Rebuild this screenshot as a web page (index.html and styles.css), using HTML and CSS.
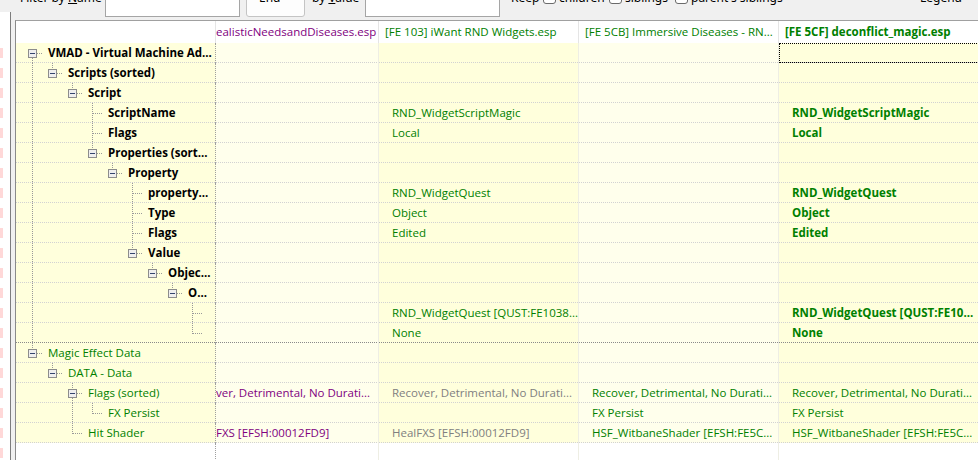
FILE: index.html
```html
<!DOCTYPE html>
<html>
<head>
<meta charset="utf-8">
<title>xEdit view</title>
<link rel="stylesheet" href="styles.css">
</head>
<body>
<svg class="defs" aria-hidden="true">
  <symbol id="v" viewBox="0 0 20 20"><path class="dl" d="M10.5 0V20"/></symbol>
  <symbol id="t" viewBox="0 0 20 20"><path class="dl" d="M10.5 0V20M11 10.5H20"/></symbol>
  <symbol id="e" viewBox="0 0 20 20"><path class="dl" d="M10.5 0V11M11 10.5H20"/></symbol>
  <symbol id="bu" viewBox="0 0 20 20"><path class="dl" d="M10.5 0V6M15 10.5H20"/><rect class="bx" x="6.5" y="6.5" width="8" height="8"/><path class="mn" d="M8 10.5H13"/></symbol>
  <symbol id="bd" viewBox="0 0 20 20"><path class="dl" d="M10.5 15V20M15 10.5H20"/><rect class="bx" x="6.5" y="6.5" width="8" height="8"/><path class="mn" d="M8 10.5H13"/></symbol>
  <symbol id="bud" viewBox="0 0 20 20"><path class="dl" d="M10.5 0V6M10.5 15V20M15 10.5H20"/><rect class="bx" x="6.5" y="6.5" width="8" height="8"/><path class="mn" d="M8 10.5H13"/></symbol>
</svg>

<div class="side">
  <div class="side-pane"><div class="side-pink"></div></div>
</div>

<div class="right">
  <div class="toolbar">
    <span class="lbl w-name">Filter by <u>N</u>ame</span>
    <span class="field w-f1"></span>
    <span class="combo">End</span>
    <span class="lbl w-value">by <u>V</u>alue</span>
    <span class="field w-f2"></span>
    <span class="lbl w-keep">Keep</span>
    <span class="chk"></span><span class="lbl w-ch">children</span>
    <span class="chk"></span><span class="lbl w-sib">siblings</span>
    <span class="chk"></span><span class="lbl">parent's siblings</span>
    <span class="lbl legend">Legend</span>
  </div>

  <div class="grid">
    <div class="hrow">
      <div class="h"></div>
      <div class="h h1 purple">ealisticNeedsandDiseases.esp</div>
      <div class="h green">[FE 103] iWant RND Widgets.esp</div>
      <div class="h green">[FE 5CB] Immersive Diseases - RN...</div>
      <div class="h green b">[FE 5CF] deconflict_magic.esp</div>
    </div>

    <div class="row">
      <div class="c tree"><svg class="s"><use href="#bd"/></svg><span class="tt b">VMAD - Virtual Machine Ad...</span></div>
      <div class="c l1"></div><div class="c d2"></div><div class="c l3"></div><div class="c d4 focus"></div>
    </div>
    <div class="row">
      <div class="c tree"><svg class="s"><use href="#v"/></svg><svg class="s"><use href="#bu"/></svg><span class="tt b">Scripts (sorted)</span></div>
      <div class="c l1"></div><div class="c d2"></div><div class="c l3"></div><div class="c d4"></div>
    </div>
    <div class="row">
      <div class="c tree"><svg class="s"><use href="#v"/></svg><i class="sp"></i><svg class="s"><use href="#bu"/></svg><span class="tt b">Script</span></div>
      <div class="c l1"></div><div class="c d2"></div><div class="c l3"></div><div class="c d4"></div>
    </div>
    <div class="row">
      <div class="c tree"><svg class="s"><use href="#v"/></svg><i class="sp"></i><i class="sp"></i><svg class="s"><use href="#t"/></svg><span class="tt b">ScriptName</span></div>
      <div class="c l1"></div><div class="c d2 green">RND_WidgetScriptMagic</div><div class="c l3"></div><div class="c d4 green b">RND_WidgetScriptMagic</div>
    </div>
    <div class="row">
      <div class="c tree"><svg class="s"><use href="#v"/></svg><i class="sp"></i><i class="sp"></i><svg class="s"><use href="#t"/></svg><span class="tt b">Flags</span></div>
      <div class="c l1"></div><div class="c d2 green">Local</div><div class="c l3"></div><div class="c d4 green b">Local</div>
    </div>
    <div class="row">
      <div class="c tree"><svg class="s"><use href="#v"/></svg><i class="sp"></i><i class="sp"></i><svg class="s"><use href="#bu"/></svg><span class="tt b">Properties (sort...</span></div>
      <div class="c l1"></div><div class="c d2"></div><div class="c l3"></div><div class="c d4"></div>
    </div>
    <div class="row">
      <div class="c tree"><svg class="s"><use href="#v"/></svg><i class="sp"></i><i class="sp"></i><i class="sp"></i><svg class="s"><use href="#bu"/></svg><span class="tt b">Property</span></div>
      <div class="c l1"></div><div class="c d2"></div><div class="c l3"></div><div class="c d4"></div>
    </div>
    <div class="row">
      <div class="c tree"><svg class="s"><use href="#v"/></svg><i class="sp"></i><i class="sp"></i><i class="sp"></i><i class="sp"></i><svg class="s"><use href="#t"/></svg><span class="tt b">property...</span></div>
      <div class="c l1"></div><div class="c d2 green">RND_WidgetQuest</div><div class="c l3"></div><div class="c d4 green b">RND_WidgetQuest</div>
    </div>
    <div class="row">
      <div class="c tree"><svg class="s"><use href="#v"/></svg><i class="sp"></i><i class="sp"></i><i class="sp"></i><i class="sp"></i><svg class="s"><use href="#t"/></svg><span class="tt b">Type</span></div>
      <div class="c l1"></div><div class="c d2 green">Object</div><div class="c l3"></div><div class="c d4 green b">Object</div>
    </div>
    <div class="row">
      <div class="c tree"><svg class="s"><use href="#v"/></svg><i class="sp"></i><i class="sp"></i><i class="sp"></i><i class="sp"></i><svg class="s"><use href="#t"/></svg><span class="tt b">Flags</span></div>
      <div class="c l1"></div><div class="c d2 green">Edited</div><div class="c l3"></div><div class="c d4 green b">Edited</div>
    </div>
    <div class="row">
      <div class="c tree"><svg class="s"><use href="#v"/></svg><i class="sp"></i><i class="sp"></i><i class="sp"></i><i class="sp"></i><svg class="s"><use href="#bu"/></svg><span class="tt b">Value</span></div>
      <div class="c l1"></div><div class="c d2"></div><div class="c l3"></div><div class="c d4"></div>
    </div>
    <div class="row">
      <div class="c tree"><svg class="s"><use href="#v"/></svg><i class="sp"></i><i class="sp"></i><i class="sp"></i><i class="sp"></i><i class="sp"></i><svg class="s"><use href="#bu"/></svg><span class="tt b">Objec...</span></div>
      <div class="c l1"></div><div class="c d2"></div><div class="c l3"></div><div class="c d4"></div>
    </div>
    <div class="row">
      <div class="c tree"><svg class="s"><use href="#v"/></svg><i class="sp"></i><i class="sp"></i><i class="sp"></i><i class="sp"></i><i class="sp"></i><i class="sp"></i><svg class="s"><use href="#bu"/></svg><span class="tt b">O...</span></div>
      <div class="c l1"></div><div class="c d2"></div><div class="c l3"></div><div class="c d4"></div>
    </div>
    <div class="row">
      <div class="c tree"><svg class="s"><use href="#v"/></svg><i class="sp"></i><i class="sp"></i><i class="sp"></i><i class="sp"></i><i class="sp"></i><i class="sp"></i><i class="sp"></i><svg class="s"><use href="#t"/></svg></div>
      <div class="c l1"></div><div class="c d2 green">RND_WidgetQuest [QUST:FE1038...</div><div class="c l3"></div><div class="c d4 green b">RND_WidgetQuest [QUST:FE10...</div>
    </div>
    <div class="row sect-end">
      <div class="c tree"><svg class="s"><use href="#v"/></svg><i class="sp"></i><i class="sp"></i><i class="sp"></i><i class="sp"></i><i class="sp"></i><i class="sp"></i><i class="sp"></i><svg class="s"><use href="#e"/></svg></div>
      <div class="c l1"></div><div class="c d2 green">None</div><div class="c l3"></div><div class="c d4 green b">None</div>
    </div>

    <div class="row">
      <div class="c tree"><svg class="s"><use href="#bu"/></svg><span class="tt green">Magic Effect Data</span></div>
      <div class="c l1"></div><div class="c d2"></div><div class="c l3"></div><div class="c d4"></div>
    </div>
    <div class="row">
      <div class="c tree"><i class="sp"></i><svg class="s"><use href="#bu"/></svg><span class="tt green">DATA - Data</span></div>
      <div class="c l1"></div><div class="c d2"></div><div class="c l3"></div><div class="c d4"></div>
    </div>
    <div class="row">
      <div class="c tree"><i class="sp"></i><i class="sp"></i><svg class="s"><use href="#bud"/></svg><span class="tt green">Flags (sorted)</span></div>
      <div class="c l1 purple">ver, Detrimental, No Durati...</div><div class="c d2 gray">Recover, Detrimental, No Durati...</div><div class="c l3 green">Recover, Detrimental, No Durati...</div><div class="c d4 green">Recover, Detrimental, No Durati...</div>
    </div>
    <div class="row">
      <div class="c tree"><i class="sp"></i><i class="sp"></i><svg class="s"><use href="#v"/></svg><svg class="s"><use href="#e"/></svg><span class="tt green">FX Persist</span></div>
      <div class="c l1"></div><div class="c d2"></div><div class="c l3 green">FX Persist</div><div class="c d4 green">FX Persist</div>
    </div>
    <div class="row">
      <div class="c tree"><i class="sp"></i><i class="sp"></i><svg class="s"><use href="#e"/></svg><span class="tt green">Hit Shader</span></div>
      <div class="c l1 purple">FXS [EFSH:00012FD9]</div><div class="c d2 gray">HealFXS [EFSH:00012FD9]</div><div class="c l3 green">HSF_WitbaneShader [EFSH:FE5C...</div><div class="c d4 green">HSF_WitbaneShader [EFSH:FE5C...</div>
    </div>

    <div class="row fill">
      <div class="c tree"></div><div class="c l1"></div><div class="c d2"></div><div class="c l3"></div><div class="c d4"></div>
    </div>
  </div>
</div>
</body>
</html>
```

FILE: styles.css
```css
* { box-sizing: border-box; margin: 0; padding: 0; }

html, body { width: 978px; height: 460px; overflow: hidden; }

body {
  background: #f0f0f0;
  font-family: "Open Sans", "Noto Sans", sans-serif;
  font-size: 11.5px;
  color: #000;
  display: flex;
}

.defs { width: 0; height: 0; overflow: hidden; display: block; flex: none; }

.dl { stroke: #999; stroke-width: 1; stroke-dasharray: 1 1; fill: none; }
.bx { fill: #eeeeee; stroke: #8c8c8c; stroke-width: 1; }
.mn { stroke: #33446e; stroke-width: 1; }

/* left pane edge */
.side { width: 15px; flex: none; padding-top: 12px; display: flex; }
.side-pane {
  width: 11px;
  height: 100%;
  background: #fff;
  border-right: 1px solid #7d7d7d;
  padding-top: 26px;
}
.side-pink {
  width: 3px;
  height: 100%;
  background-color: #ffd8d8;
  background-image: linear-gradient(#fff 50%, transparent 50%);
  background-size: 3px 20px;
}

.right { flex: 1; min-width: 0; display: flex; flex-direction: column; }

/* toolbar (top cut off) */
.toolbar {
  height: 32px;
  margin-top: -12px;
  flex: none;
  display: flex;
  align-items: flex-start;
  white-space: nowrap;
}
.lbl { line-height: 15px; margin-top: 2px; font-size: 12px; font-family: "Noto Sans", sans-serif; }
.w-name { margin-left: 5px; width: 85px; }
.field { width: 135px; height: 29px; background: #fff; border: 1px solid #a5a5a5; }
.combo {
  width: 59px; height: 29px; margin-left: 6px;
  background: #fdfdfd; border: 1px solid #c4c4c4; border-radius: 3px;
  padding: 1px 0 0 12px; line-height: 15px; font-size: 12px;
  font-family: "Noto Sans", sans-serif;
  overflow: hidden;
}
.w-value { margin-left: 7px; width: 53px; }
.w-keep { margin-left: 11px; width: 32px; }
.chk {
  width: 13px; height: 13px; margin-top: 3px;
  background: #fff; border: 1px solid #6b6b6b; border-radius: 3px;
  margin-right: 3px;
}
.w-ch { width: 50px; }
.w-sib { width: 50px; }
.legend { margin-left: auto; margin-right: 16px; }

/* grid */
.grid {
  flex: 1;
  background: #fff;
  border-top: 1px solid #a0a0a0;
  border-left: 1px solid #8a8a8a;
  overflow: hidden;
}

.hrow, .row {
  display: grid;
  grid-template-columns: 200px 163px 200px 200px 200px;
}
.hrow { height: 22px; background: #fff; }
.h {
  border-right: 1px solid #e5e5e5;
  line-height: 22px;
  padding-left: 6px;
  white-space: nowrap;
  overflow: hidden;
}
.h1 { padding-left: 0; }

.row { height: 20px; }
.c {
  height: 20px;
  line-height: 20px;
  white-space: nowrap;
  overflow: hidden;
  padding-left: 13px;
  border-right: 1px solid #eeeee4;
  background-image: linear-gradient(90deg, #d2d2d2 50%, transparent 50%);
  background-size: 2px 1px;
  background-repeat: repeat-x;
  background-position: 0 100%;
}
.sect-end .c {
  background-image: linear-gradient(90deg, #8a8a8a 50%, transparent 50%);
}
.tree {
  display: flex;
  align-items: center;
  padding-left: 6px;
  border-right: 1px dotted #a0a0a0;
  background-color: #ffffdc;
}
.l1 { background-color: #ffffec; padding-left: 0; }
.d2 { background-color: #ffffdc; }
.l3 { background-color: #ffffec; }
.d4 { background-color: #ffffdc; }

.focus { outline: 1px dotted #000; outline-offset: -1px; }

.row.fill { height: 40px; }
.fill .c { background: #fff; height: 40px; }

.s { width: 20px; height: 20px; flex: none; display: block; }
.sp { width: 20px; height: 20px; flex: none; display: block; }
.tt { margin-left: 6px; }

.b { font-weight: 700; }
.green { color: #008000; }
.purple { color: #800080; }
.gray { color: #808080; }
```
